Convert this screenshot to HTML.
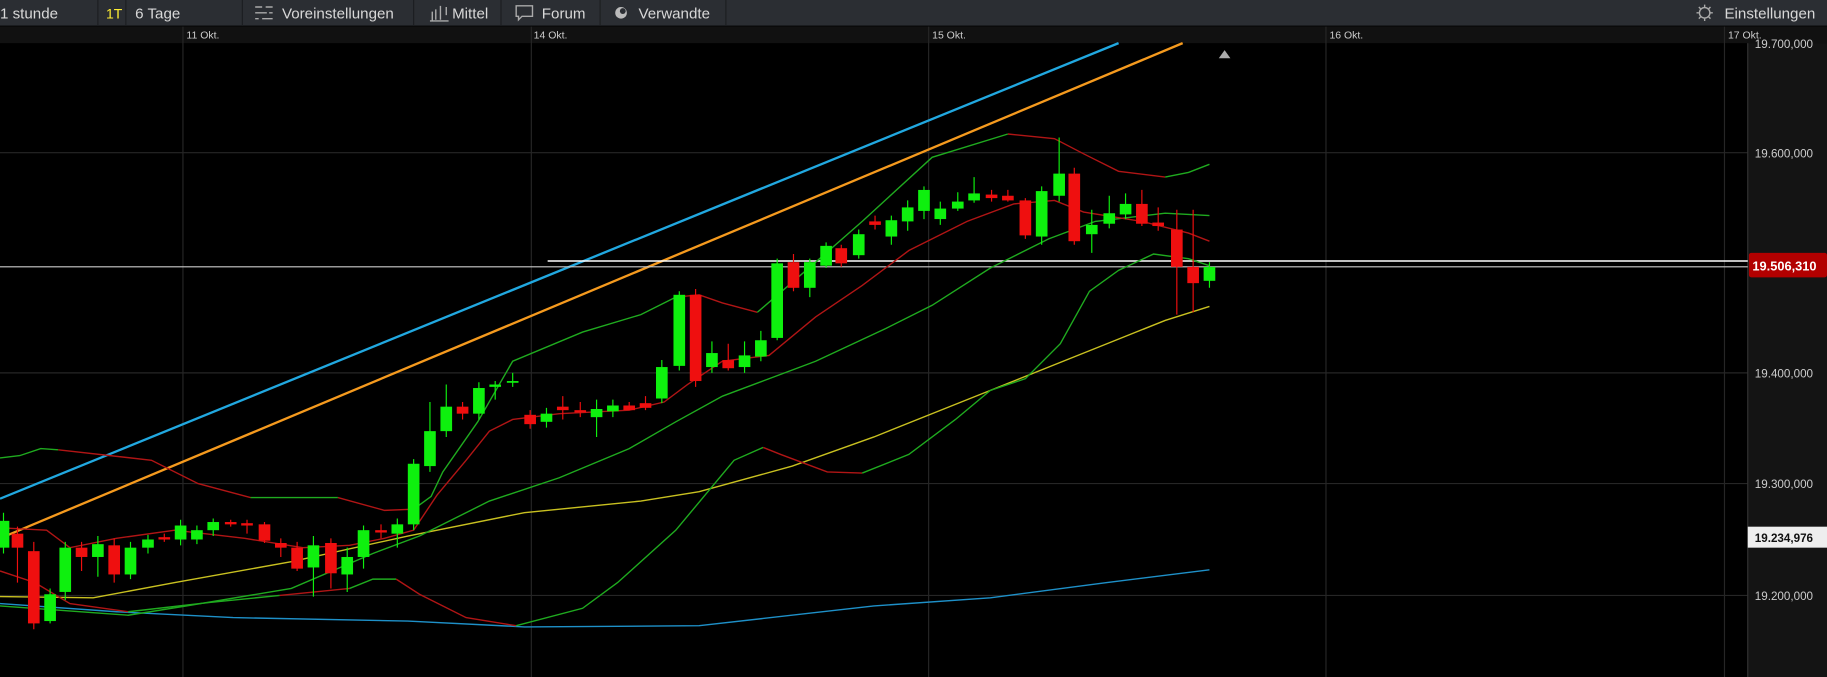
<!DOCTYPE html>
<html><head><meta charset="utf-8"><style>
html,body{margin:0;padding:0;background:#000;width:1827px;height:677px;overflow:hidden}
svg{display:block}
text{font-family:"Liberation Sans",sans-serif}
</style></head><body>
<svg width="1827" height="677" viewBox="0 0 1568 581" preserveAspectRatio="none" xmlns="http://www.w3.org/2000/svg">
<rect width="1568" height="581" fill="#000"/>
<rect x="0" y="0" width="1568" height="22" fill="#2b2e33"/>
<line x1="0" y1="22" x2="1568" y2="22" stroke="#1a1c1f"/>
<g stroke="#1c1e21" stroke-width="1">
<line x1="84" y1="0" x2="84" y2="22"/><line x1="108" y1="0" x2="108" y2="22"/><line x1="208" y1="0" x2="208" y2="22"/><line x1="355" y1="0" x2="355" y2="22"/><line x1="430" y1="0" x2="430" y2="22"/><line x1="515" y1="0" x2="515" y2="22"/><line x1="623" y1="0" x2="623" y2="22"/>
</g>
<g font-size="13" fill="#d8d8d8">
<text x="0" y="16">1 stunde</text>
<text x="91" y="16" fill="#ffee33" font-size="12">1T</text>
<text x="116" y="16">6 Tage</text>
<text x="242" y="16">Voreinstellungen</text>
<text x="388" y="16">Mittel</text>
<text x="465" y="16">Forum</text>
<text x="548" y="16">Verwandte</text>
<text x="1480" y="16">Einstellungen</text>
</g>
<g stroke="#aaa" stroke-width="1.2" fill="none">
<path d="M219 6h6M228 6h6M219 11h10M231 11h3M219 16h3M225 16h9"/>
<path d="M371 10v8M374 8v9M378 5v12M383 6v7M369 18h16"/>
<path d="M443 5h14v9h-9l-3 3v-3h-2z"/>
<circle cx="1463" cy="11" r="4.5"/>
<path d="M1463 4v2M1463 16v2M1456 11h2M1468 11h2M1458 6l1.5 1.5M1466.5 14.5l1.5 1.5M1458 16l1.5-1.5M1466.5 7.5l1.5-1.5"/>
</g>
<circle cx="533" cy="11" r="5" fill="#bbb"/><circle cx="534.5" cy="9.5" r="2.5" fill="#2b2e33"/>
<rect x="0" y="23" width="1568" height="14" fill="#111"/>
<g font-size="9" fill="#ccc">
<text x="160" y="33">11 Okt.</text><text x="458" y="33">14 Okt.</text><text x="800" y="33">15 Okt.</text><text x="1141" y="33">16 Okt.</text><text x="1483" y="33">17 Okt.</text>
</g>
<g stroke="#262626" stroke-width="1">
<line x1="157" y1="23" x2="157" y2="581"/><line x1="456" y1="23" x2="456" y2="581"/><line x1="797" y1="23" x2="797" y2="581"/><line x1="1138" y1="23" x2="1138" y2="581"/><line x1="1480" y1="23" x2="1480" y2="581"/>
<line x1="0" y1="131" x2="1500" y2="131"/><line x1="0" y1="320" x2="1500" y2="320"/><line x1="0" y1="415" x2="1500" y2="415"/><line x1="0" y1="511" x2="1500" y2="511"/>
</g>
<rect x="1500" y="37" width="68" height="544" fill="#141414"/>
<line x1="1500" y1="37" x2="1500" y2="581" stroke="#333"/>
<g font-size="10" fill="#ccc">
<text x="1506" y="41">19.700,000</text><text x="1506" y="135">19.600,000</text><text x="1506" y="324">19.400,000</text><text x="1506" y="419">19.300,000</text><text x="1506" y="515">19.200,000</text>
</g>
<rect x="1500" y="452" width="68" height="18" fill="#eee"/>
<text x="1506" y="465" font-size="10" fill="#111" font-weight="bold">19.234,976</text>
<rect x="1501" y="217" width="67" height="21" rx="2" fill="#b20000"/>
<text x="1504" y="232" font-size="11" fill="#fff" font-weight="bold">19.506,310</text>
<line x1="0" y1="428" x2="960" y2="37" stroke="#21a8e0" stroke-width="2"/>
<line x1="0" y1="462" x2="1015" y2="37" stroke="#f59a1e" stroke-width="2"/>
<line x1="470" y1="224" x2="1500" y2="224" stroke="#fff" stroke-width="1.3"/>
<line x1="0" y1="229" x2="1500" y2="229" stroke="#ccc" stroke-width="1"/>
<g fill="none" stroke-width="1.2">
<polyline stroke="#1e90c8" points="0,518 100,525 200,530 350,533 450,538 600,537 750,520 850,513 950,500 1038,489"/>
<polyline stroke="#c8c020" points="0,512 80,513 150,500 250,482 350,460 450,440 550,430 600,422 680,400 750,375 850,335 950,295 1000,275 1038,263"/>
<polyline stroke="#1faa1f" points="0,520 110,528 160,520 250,505 320,475 360,460 420,430 480,410 540,385 580,362 620,340 700,310 760,282 800,262 850,230 900,205 940,190 1000,183 1038,185"/>
<polyline stroke="#b01515" points="0,453 40,455 60,470 100,462 150,455 210,462 260,470 300,468 330,462 355,455 375,425 400,395 420,370 440,360 480,355 540,352 570,345 590,330 620,310 660,305 700,272 740,245 780,215 830,190 870,175 905,172 930,182 980,190 1020,200 1038,207"/>
<polyline stroke="#1faa1f" points="0,393 17,391 35,385 50,386"/>
<polyline stroke="#b01515" points="50,386 130,395 170,415 215,427"/>
<polyline stroke="#1faa1f" points="215,427 290,427"/>
<polyline stroke="#b01515" points="290,427 330,438 355,437"/>
<polyline stroke="#1faa1f" points="355,437 370,426 380,405 410,362 440,310 500,285 550,270 580,255"/>
<polyline stroke="#b01515" points="580,255 600,253 620,260 650,268"/>
<polyline stroke="#1faa1f" points="650,268 700,225 740,190 800,135 865,115"/>
<polyline stroke="#b01515" points="865,115 905,119 930,132 960,147 1000,152"/>
<polyline stroke="#1faa1f" points="1000,152 1020,148 1038,141"/>
<polyline stroke="#b01515" points="0,490 30,500 60,518 110,525"/>
<polyline stroke="#1faa1f" points="110,525 180,517 240,511"/>
<polyline stroke="#b01515" points="240,511 300,505"/>
<polyline stroke="#1faa1f" points="300,505 320,497 340,497"/>
<polyline stroke="#b01515" points="340,497 360,510 400,530 443,537"/>
<polyline stroke="#1faa1f" points="443,537 500,522 530,500 580,455 630,395 655,384"/>
<polyline stroke="#b01515" points="655,384 670,390 710,405 740,406"/>
<polyline stroke="#1faa1f" points="740,406 780,390 820,360 850,335 880,325 910,295 935,250 960,232 990,218 1020,222 1038,228"/>
</g>
<g fill="#0ef00e" stroke="#0ef00e" stroke-width="1">
<path d="M3 440V475M43 505V535M56 465V515M84 460V495M112 465V497M127 459V475M155 446V468M169 451V467M183 445V460M269 460V512M298 470V508M312 451V488M341 445V470M355 394V455M369 345V405M383 330V375M411 328V360M425 327V343M440 320V332M469 350V367M512 343V375M526 343V358M568 309V346M583 250V318M611 293V320M639 293V320M653 284V310M667 222V292M695 222V255M709 208V230M737 197V222M765 185V210M779 172V198M793 160V188M807 173V193M822 165V181M836 152V174M894 160V210M909 118V173M937 180V217M952 168V196M966 166V188M1038 225V247"/>
<g stroke="none">
<rect x="-2" y="447" width="10" height="23"/><rect x="38" y="510" width="10" height="23"/><rect x="51" y="470" width="10" height="38"/><rect x="79" y="467" width="10" height="11"/><rect x="107" y="470" width="10" height="23"/><rect x="122" y="463" width="10" height="7"/><rect x="150" y="451" width="10" height="12"/><rect x="164" y="455" width="10" height="8"/><rect x="178" y="448" width="10" height="7"/><rect x="264" y="468" width="10" height="19"/><rect x="293" y="478" width="10" height="15"/><rect x="307" y="455" width="10" height="23"/><rect x="336" y="450" width="10" height="8"/><rect x="350" y="398" width="10" height="52"/><rect x="364" y="370" width="10" height="30"/><rect x="378" y="349" width="10" height="21"/><rect x="406" y="333" width="10" height="22"/><rect x="420" y="330" width="10" height="2"/><rect x="435" y="327" width="10" height="1.5"/><rect x="464" y="355" width="10" height="7"/><rect x="507" y="351" width="10" height="7"/><rect x="521" y="348" width="10" height="5"/><rect x="563" y="315" width="10" height="27"/><rect x="578" y="253" width="10" height="61"/><rect x="606" y="303" width="10" height="12"/><rect x="634" y="305" width="10" height="10"/><rect x="648" y="292" width="10" height="14"/><rect x="662" y="226" width="10" height="64"/><rect x="690" y="225" width="10" height="22"/><rect x="704" y="211" width="10" height="17"/><rect x="732" y="201" width="10" height="18"/><rect x="760" y="189" width="10" height="14"/><rect x="774" y="178" width="10" height="12"/><rect x="788" y="163" width="10" height="18"/><rect x="802" y="179" width="10" height="9"/><rect x="817" y="173" width="10" height="6"/><rect x="831" y="166" width="10" height="6"/><rect x="889" y="164" width="10" height="39"/><rect x="904" y="149" width="10" height="19"/><rect x="932" y="193" width="10" height="8"/><rect x="947" y="183" width="10" height="9"/><rect x="961" y="175" width="10" height="9"/><rect x="1033" y="229" width="10" height="12"/>
</g></g>
<g fill="#ef0f0f" stroke="#ef0f0f" stroke-width="1">
<path d="M15 452V500M29 465V540M70 465V490M98 462V500M141 458V465M198 446V452M212 446V458M227 448V466M241 462V478M255 465V490M284 462V505M327 450V462M397 345V360M455 352V368M483 340V360M498 345V358M540 345V352M554 340V352M597 248V332M625 295V318M681 218V250M722 210V229M751 185V197M851 163V173M865 163V173M880 170V205M922 144V210M980 163V194M994 178V198M1010 180V270M1024 180V268"/>
<g stroke="none">
<rect x="10" y="458" width="10" height="12"/><rect x="24" y="473" width="10" height="62"/><rect x="65" y="470" width="10" height="8"/><rect x="93" y="468" width="10" height="25"/><rect x="136" y="461" width="10" height="2"/><rect x="193" y="448" width="10" height="2"/><rect x="207" y="449" width="10" height="2"/><rect x="222" y="450" width="10" height="14"/><rect x="236" y="466" width="10" height="4"/><rect x="250" y="470" width="10" height="18"/><rect x="279" y="466" width="10" height="26"/><rect x="322" y="455" width="10" height="2"/><rect x="392" y="349" width="10" height="6"/><rect x="450" y="356" width="10" height="8"/><rect x="478" y="349" width="10" height="3"/><rect x="493" y="352" width="10" height="2"/><rect x="535" y="348" width="10" height="4"/><rect x="549" y="346" width="10" height="4"/><rect x="592" y="253" width="10" height="74"/><rect x="620" y="309" width="10" height="7"/><rect x="676" y="225" width="10" height="22"/><rect x="717" y="213" width="10" height="13"/><rect x="746" y="190" width="10" height="3"/><rect x="846" y="167" width="10" height="3"/><rect x="860" y="168" width="10" height="4"/><rect x="875" y="172" width="10" height="30"/><rect x="917" y="149" width="10" height="58"/><rect x="975" y="175" width="10" height="17"/><rect x="989" y="191" width="10" height="3"/><rect x="1005" y="197" width="10" height="32"/><rect x="1019" y="229" width="10" height="14"/>
</g></g>
<path d="M1046 50l5-7 5 7z" fill="#aaa"/>
</svg>
</body></html>
